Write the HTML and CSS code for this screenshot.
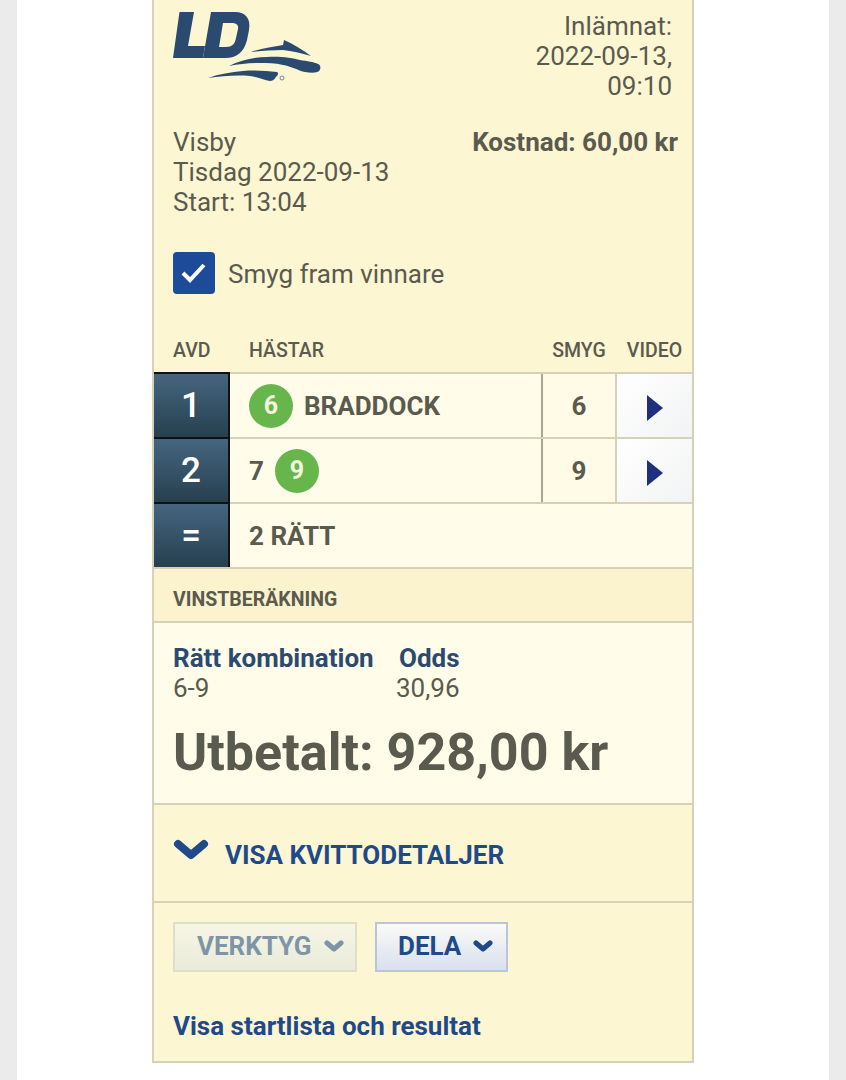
FILE: index.html
```html
<!DOCTYPE html>
<html lang="sv">
  <head>
    <meta charset="UTF-8" />
    <title>Kvitto</title>
    <link rel="stylesheet" href="styles.css">
  </head>
  <body>
    <div class="page">
      <div class="receipt">
        <div class="top">
          <svg class="logo" width="150" height="72" viewBox="0 0 150 72">
            <path fill="#2b4a70" d="M6.500 1H21L15 35H32L30 47H0z"/>
            <path fill="#2b4a70" fill-rule="evenodd" d="M38 1H62C73 1 78 8 76 19L74 29C71 41 64 47 52 47H30zM50 12L46 36H53C59 36 62 33 63 27L65 18C66 14 63 12 59 12z"/>
            <path fill="#2b4a70" d="M78 41C89 37 100 36 110 34L111 29C120 33 130 39 138 45C128 42 119 40 110 39C99 39 88 40 78 41z"/>
            <path fill="#2b4a70" d="M56 55C68 49 82 46 94 46C106 45 120 47 127 49C134 50 141 51 145 53C148 54 148 58 146 60C144 62 138 62 132 61C126 60 118 55 110 54C102 52 94 52 87 52C76 52 66 53 56 55z"/>
            <path fill="#2b4a70" d="M35 67C46 63 58 61 70 60C82 59 94 60 104 61C106 62 105 64 103 66C101 69 99 70 97 70C91 69 84 66 77 65C63 64 49 65 35 67z"/>
            <circle cx="109" cy="67" r="2" fill="none" stroke="#77889c"/>
          </svg>
          <div class="submitted">Inlämnat:<br>2022-09-13,<br>09:10</div>
        </div>
        <div class="info">
          <div>Visby<br>Tisdag 2022-09-13<br>Start: 13:04</div>
          <div class="cost">Kostnad: 60,00 kr</div>
        </div>
        <div class="check-row">
          <span class="checkbox">
            <svg width="28" height="24" viewBox="0 0 28 24"><path d="M3 12l7 7L24 4" fill="none" stroke="#fff" stroke-width="4"/></svg>
          </span>
          <span class="check-label">Smyg fram vinnare</span>
        </div>
        <div class="table-head">
          <span>AVD</span>
          <span>HÄSTAR</span>
          <span class="center">SMYG</span>
          <span class="center">VIDEO</span>
        </div>
        <div class="table">
          <div class="row">
            <div class="num">1</div>
            <div class="horses"><span class="ball">6</span><span class="name">BRADDOCK</span></div>
            <div class="smyg">6</div>
            <div class="video"><span class="play"></span></div>
          </div>
          <div class="row">
            <div class="num">2</div>
            <div class="horses"><span>7</span><span class="ball">9</span></div>
            <div class="smyg">9</div>
            <div class="video"><span class="play"></span></div>
          </div>
          <div class="row sum">
            <div class="num eq">=</div>
            <div class="horses">2 RÄTT</div>
          </div>
        </div>
        <div class="section-head">VINSTBERÄKNING</div>
        <div class="calc">
          <div class="calc-grid">
            <span class="calc-title">Rätt kombination</span>
            <span class="calc-title odds-title">Odds</span>
            <span>6-9</span>
            <span>30,96</span>
          </div>
          <div class="paid">Utbetalt: 928,00 kr</div>
        </div>
        <div class="toggle">
          <svg width="36" height="24" viewBox="0 0 36 24"><path d="M5 6l13 11L31 6" fill="none" stroke="#1e4a8a" stroke-width="8" stroke-linecap="round" stroke-linejoin="round"/></svg>
          <span class="toggle-label">VISA KVITTODETALJER</span>
        </div>
        <div class="tools">
          <div class="buttons">
            <div class="btn btn-off">VERKTYG
              <svg width="20" height="14" viewBox="0 0 20 14"><path d="M3 4l7 6 7-6" fill="none" stroke="#7f95a6" stroke-width="5" stroke-linecap="round" stroke-linejoin="round"/></svg>
            </div>
            <div class="btn btn-on">DELA
              <svg width="20" height="14" viewBox="0 0 20 14"><path d="M3 4l7 6 7-6" fill="none" stroke="#1e4a8a" stroke-width="5" stroke-linecap="round" stroke-linejoin="round"/></svg>
            </div>
          </div>
          <div class="link">Visa startlista och resultat</div>
        </div>
      </div>
    </div>
  </body>
</html>
```

FILE: styles.css
```css
* {
  margin: 0;
  padding: 0;
  box-sizing: border-box;
}

body {
  font-family: Roboto, "Liberation Sans", sans-serif;
  background: #ebebeb;
  color: #5a5a4e;
  height: 1080px;
  overflow: hidden;
}

.page {
  width: 812px;
  height: 1080px;
  margin: 0 auto;
  background: #fff;
  padding: 0 0 0 135px;
}

.receipt {
  width: 542px;
  height: 1063px;
  background: #fdf6d3;
  border: 2px solid #d6d2b8;
  border-top: 0;
  font-size: 26px;
  line-height: 30px;
}

.top {
  height: 127px;
  display: flex;
  justify-content: space-between;
  padding: 11px 20px 0 19px;
}

.submitted {
  text-align: right;
}

.info {
  height: 98px;
  display: flex;
  justify-content: space-between;
  padding: 0 14px 0 19px;
}

.cost {
  font-weight: 700;
}

.check-row {
  height: 42px;
  margin: 27px 0 0 19px;
  display: flex;
  align-items: center;
  gap: 13px;
}

.check-label {
  padding-top: 2px;
}

.checkbox {
  width: 42px;
  height: 42px;
  background: #1e4a9a;
  border-radius: 4px;
  display: flex;
  align-items: center;
  justify-content: center;
}

.table-head {
  height: 78px;
  display: grid;
  grid-template-columns: 76px 311px 76px 75px;
  align-items: end;
  padding-bottom: 9px;
  font-size: 19.500px;
  line-height: 24px;
  font-weight: 500;
}

.table-head span:first-child {
  padding-left: 19px;
}

.table-head span:nth-child(2) {
  padding-left: 19px;
}

.center {
  text-align: center;
}

.table {
  border-top: 2px solid #d6d2b8;
}

.row {
  height: 65px;
  display: grid;
  grid-template-columns: 76px 311px 76px 75px;
  border-bottom: 2px solid #d6d2b8;
  background: #fffdea;
}

.row.sum {
  grid-template-columns: 76px 1fr;
}

.num {
  background: linear-gradient(#45657f, #27404f);
  border-right: 2px solid #111;
  border-bottom: 2px solid #111;
  margin-bottom: -2px;
  color: #fff;
  font-size: 35px;
  font-weight: 500;
  display: flex;
  align-items: center;
  justify-content: center;
}

.row:first-child .num {
  border-top: 2px solid #111;
  margin-top: -2px;
}

.num.eq {
  border-bottom: 0;
  margin-bottom: 0;
}

.horses {
  display: flex;
  align-items: center;
  gap: 11px;
  padding-left: 19px;
  font-size: 26px;
  font-weight: 700;
}

.ball {
  width: 44px;
  height: 44px;
  border-radius: 50%;
  background: #67b64c;
  color: #f4f4dc;
  display: flex;
  align-items: center;
  justify-content: center;
  font-size: 25px;
  font-weight: 700;
}

.smyg {
  border-left: 2px solid #a9a695;
  border-right: 2px solid #d6d2b8;
  background: #fffbe6;
  font-size: 26px;
  font-weight: 700;
  display: flex;
  align-items: center;
  justify-content: center;
}

.video {
  background: linear-gradient(135deg, #fff, #f2f3f4);
  display: flex;
  align-items: center;
  justify-content: center;
}

.play {
  width: 0;
  height: 0;
  border-left: 16px solid #1f2f80;
  border-top: 13px solid transparent;
  border-bottom: 13px solid transparent;
  margin-top: 4px;
}

.section-head {
  height: 54px;
  background: #fbf3cd;
  border-bottom: 2px solid #d6d2b8;
  padding: 17px 0 0 19px;
  font-size: 19.500px;
  line-height: 28px;
  font-weight: 700;
}

.calc {
  height: 182px;
  background: #fffdea;
  border-bottom: 2px solid #d6d2b8;
  padding: 20px 0 0 19px;
}

.calc-grid {
  display: grid;
  grid-template-columns: 223px 1fr;
}

.calc-title {
  color: #2b4a70;
  font-weight: 700;
}

.odds-title {
  padding-left: 3px;
}

.paid {
  margin-top: 21px;
  font-size: 52px;
  line-height: 58px;
  font-weight: 700;
}

.toggle {
  height: 98px;
  border-bottom: 2px solid #d6d2b8;
  display: flex;
  align-items: center;
  gap: 16px;
  padding-left: 19px;
  color: #1e4a8a;
  font-weight: 700;
}

.toggle svg {
  margin-top: -6px;
}

.toggle-label {
  padding-top: 4px;
}

.tools {
  padding: 19px 0 0 19px;
}

.buttons {
  display: flex;
  gap: 18px;
}

.btn {
  height: 50px;
  display: flex;
  align-items: center;
  gap: 12px;
  font-weight: 700;
  border: 2px solid;
  padding-bottom: 2px;
}

.btn-off {
  width: 184px;
  padding-left: 22px;
  color: #7f95a6;
  border-color: #dedfc9;
  background: linear-gradient(#f7f6e6, #e9ead9);
}

.btn-on {
  width: 133px;
  padding-left: 21px;
  color: #1e4a8a;
  border-color: #b9c6da;
  background: linear-gradient(#fafaf6, #d9e1ee);
}

.link {
  margin-top: 39px;
  color: #1e4a8a;
  font-weight: 700;
}
```
